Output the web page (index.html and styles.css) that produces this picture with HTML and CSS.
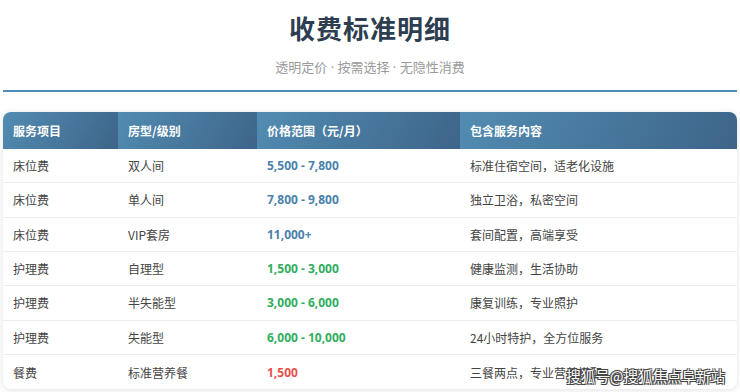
FILE: index.html
```html
<!DOCTYPE html>
<html lang="zh-CN">
<head>
<meta charset="utf-8">
<title>收费标准明细</title>
<link rel="stylesheet" href="styles.css">
</head>
<body>
<div class="page">
  <header class="head">
    <h1 class="title">收费标准明细</h1>
    <p class="subtitle">透明定价 · 按需选择 · 无隐性消费</p>
  </header>
  <div class="rule"></div>
  <div class="card">
    <div class="grid">
      <div class="th">服务项目</div>
      <div class="th">房型/级别</div>
      <div class="th">价格范围（元/月）</div>
      <div class="th">包含服务内容</div>

      <div class="td">床位费</div>
      <div class="td">双人间</div>
      <div class="td price blue">5,500 - 7,800</div>
      <div class="td">标准住宿空间，适老化设施</div>

      <div class="td">床位费</div>
      <div class="td">单人间</div>
      <div class="td price blue">7,800 - 9,800</div>
      <div class="td">独立卫浴，私密空间</div>

      <div class="td">床位费</div>
      <div class="td">VIP套房</div>
      <div class="td price blue">11,000+</div>
      <div class="td">套间配置，高端享受</div>

      <div class="td">护理费</div>
      <div class="td">自理型</div>
      <div class="td price green">1,500 - 3,000</div>
      <div class="td">健康监测，生活协助</div>

      <div class="td">护理费</div>
      <div class="td">半失能型</div>
      <div class="td price green">3,000 - 6,000</div>
      <div class="td">康复训练，专业照护</div>

      <div class="td">护理费</div>
      <div class="td">失能型</div>
      <div class="td price green">6,000 - 10,000</div>
      <div class="td">24小时特护，全方位服务</div>

      <div class="td last">餐费</div>
      <div class="td last">标准营养餐</div>
      <div class="td last price red">1,500</div>
      <div class="td last">三餐两点，专业营养搭配</div>
    </div>
  </div>
  <div class="watermark">搜狐号@搜狐焦点阜新站</div>
</div>
</body>
</html>
```

FILE: styles.css
```css
* { box-sizing: border-box; }
html, body {
  margin: 0;
  padding: 0;
  background: #ffffff;
  overflow: hidden;
}
body {
  font-family: "Noto Sans CJK SC", "Noto Sans", sans-serif;
  color: #444;
}
.page {
  position: relative;
  width: 740px;
  height: 392px;
  padding: 12px 3px 0 3px;
}
.head {
  text-align: center;
}
.title {
  margin: 0;
  font-size: 26px;
  line-height: 32px;
  font-weight: 700;
  letter-spacing: 1px;
  color: #2c3e50;
}
.subtitle {
  margin: 13px 0 0 0;
  font-family: "Open Sans", "Noto Sans CJK SC", sans-serif;
  font-size: 13px;
  line-height: 20px;
  color: #9a9a9a;
}
.rule {
  margin-top: 13px;
  height: 2px;
  background: #4d8bb2;
}
.card {
  margin-top: 20px;
  border-radius: 8px;
  overflow: hidden;
  background: #fff;
  box-shadow: 0 1px 6px rgba(0, 0, 0, 0.12);
}
.grid {
  display: grid;
  grid-template-columns: 115px 139px 203px 277px;
}
.th {
  height: 37px;
  display: flex;
  align-items: center;
  padding: 0 10px;
  font-size: 12px;
  font-weight: 700;
  color: #ffffff;
  background: linear-gradient(120deg, #528cb2 0%, #3e6489 100%);
}
.td {
  height: 34.33px;
  display: flex;
  align-items: center;
  padding: 0 10px;
  font-size: 12px;
  color: #444;
  border-bottom: 1px solid #efefef;
}
.td.last {
  border-bottom: none;
}
.price {
  font-family: "Open Sans", "Noto Sans", sans-serif;
  font-weight: 700;
}
.blue { color: #4a82ad; }
.green { color: #2fae5e; }
.red { color: #e8504a; }
.watermark {
  position: absolute;
  right: 15px;
  bottom: 6px;
  font-size: 14.5px;
  line-height: 20px;
  color: #ffffff;
  text-shadow: 1px 1px 0 #444, -1px -1px 0 #444, 1px -1px 0 #444, -1px 1px 0 #444, 0 0 2px #333;
}
```
